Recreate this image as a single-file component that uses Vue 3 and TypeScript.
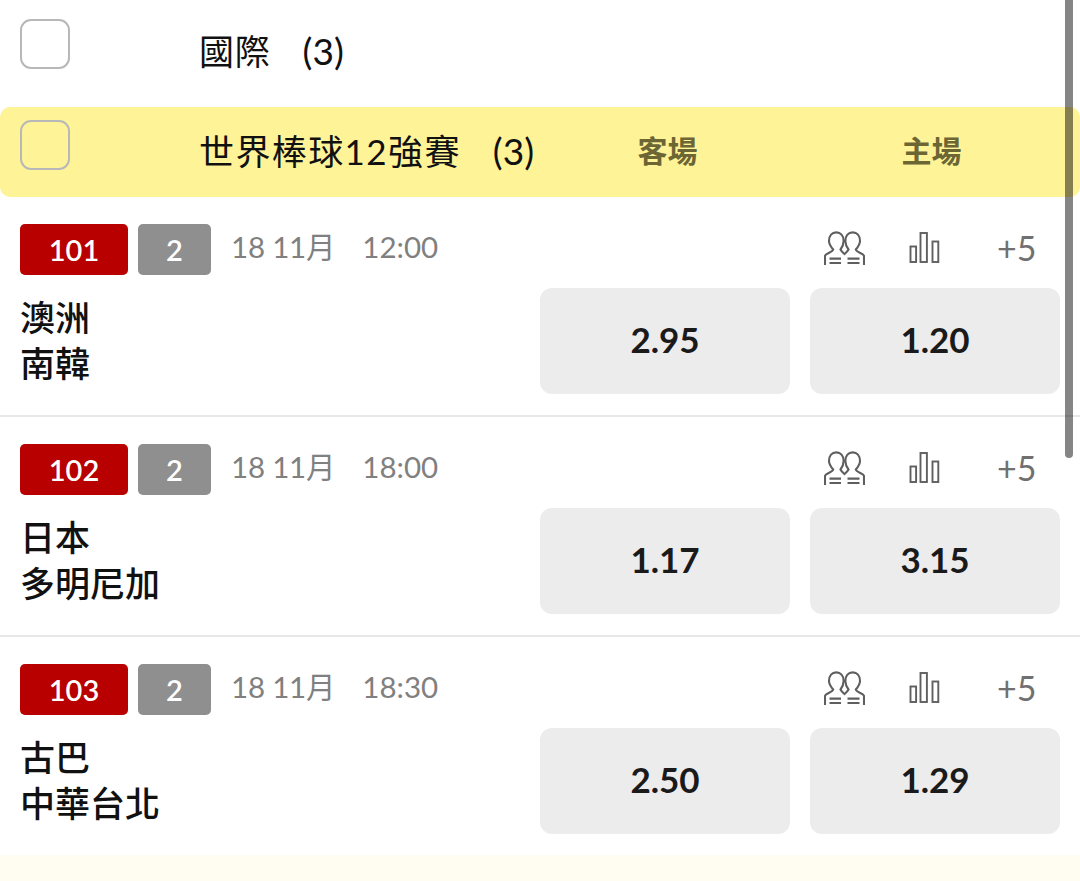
<script setup lang="ts">
interface Match { code: string; time: string; away: string; home: string; oddA: string; oddB: string }
const matches: Match[] = [
  { code: '101', time: '12:00', away: '澳洲', home: '南韓', oddA: '2.95', oddB: '1.20' },
  { code: '102', time: '18:00', away: '日本', home: '多明尼加', oddA: '1.17', oddB: '3.15' },
  { code: '103', time: '18:30', away: '古巴', home: '中華台北', oddA: '2.50', oddB: '1.29' },
]
</script>

<template>
  <div class="page">
    <section class="region">
      <span class="check"></span>
      <span class="title">國際</span>
      <span class="count">(3)</span>
    </section>
    <section class="league">
      <span class="check"></span>
      <span class="title">世界棒球12強賽</span>
      <span class="count">(3)</span>
      <span class="col col-away">客場</span>
      <span class="col col-home">主場</span>
    </section>
    <article v-for="m in matches" :key="m.code" class="match">
      <div class="meta">
        <span class="badge red">{{ m.code }}</span>
        <span class="badge grey">2</span>
        <span class="date">18 11月</span>
        <span class="time">{{ m.time }}</span>
        <span class="tools">
          <svg class="people" width="41" height="35" viewBox="0 0 41 35" fill="none" stroke="#5f5f5f" stroke-width="2.1">
            <path d="M1 34V25C1 22.5 8.5 21.5 9.2 18.5C7 16 5 13 5 10C5 4.5 8 1.4 12.3 1.4S19.6 4.5 19.6 10C19.6 13 18.4 16 16.5 18.5C17.5 20.5 19 21.5 20.5 23C22 21.5 23.5 20.5 24.5 18.5C22.6 16 21.4 13 21.4 10C21.4 4.5 24.4 1.4 28.7 1.4S36 4.5 36 10C36 13 34 16 31.8 18.5C32.5 21.5 40 22.5 40 25V34" />
            <path d="M5.5 27.6H17M5.5 32H17M23.5 27.6H35.5M23.5 32H35.5" stroke-width="2.2" />
          </svg>
          <svg class="bars" width="32" height="32" viewBox="0 0 32 32" fill="none" stroke="#5f5f5f" stroke-width="1.9">
            <rect x="1.5" y="14.5" width="5.6" height="15.5" />
            <rect x="11.5" y="1" width="6.4" height="29" />
            <rect x="23.5" y="9.5" width="5.8" height="20.5" />
          </svg>
          <span class="more">+5</span>
        </span>
      </div>
      <div class="body">
        <div class="teams">
          <div>{{ m.away }}</div>
          <div>{{ m.home }}</div>
        </div>
        <button class="odd">{{ m.oddA }}</button>
        <button class="odd">{{ m.oddB }}</button>
      </div>
    </article>
    <div class="next"></div>
    <div class="scrollbar"></div>
  </div>
</template>

<style>
html, body { margin: 0; background: #fff; overflow: hidden; }
</style>

<style scoped>
.page {
  position: relative;
  width: 1080px;
  height: 881px;
  overflow: hidden;
  display: flex;
  flex-direction: column;
  background: #fff;
  font-family: Lato, "Noto Sans CJK TC", sans-serif;
  color: #111;
}
.region, .league {
  box-sizing: border-box;
  display: flex;
  align-items: center;
  padding-left: 20px;
}
.region { height: 106.5px; padding-bottom: 12px; }
.league {
  height: 90px;
  padding-bottom: 1px;
  background: #fff398;
  border-radius: 10px;
}
.check {
  box-sizing: border-box;
  width: 50px;
  height: 50px;
  border: 2px solid #b8b8b8;
  border-radius: 11px;
  margin-right: 129px;
  margin-top: -13px;
}
.region .check { margin-top: -4px; margin-bottom: 2px; }
.title { font-size: 35px; line-height: 46px; color: #111; letter-spacing: 1.4px; }
.region .title { letter-spacing: 0.8px; }
.region .title, .region .count { margin-top: 8px; }
.count { font-size: 37px; line-height: 46px; margin-left: 32px; color: #111; }
.col {
  position: absolute;
  top: 128.5px;
  font-size: 30px;
  line-height: 42px;
  font-weight: 700;
  color: #6b6634;
}
.col-away { left: 637.5px; }
.col-home { left: 901.5px; }
.match {
  box-sizing: border-box;
  height: 220px;
  padding: 27.5px 20px 0;
  border-bottom: 2px solid #e8e8e8;
}
.match:last-of-type { border-bottom: none; height: 218px; }
.meta {
  display: flex;
  align-items: center;
  height: 50.5px;
}
.badge {
  box-sizing: border-box;
  height: 50.5px;
  border-radius: 5px;
  color: #fff;
  font-size: 29px;
  line-height: 52px;
  text-align: center;
}
.red { width: 108px; background: #b90000; font-weight: 600; }
.grey { width: 73px; margin-left: 10px; background: #8f8f8f; font-weight: 600; }
.date { margin-left: 20px; font-size: 29.5px; color: #808080; margin-top: -8px; letter-spacing: -0.2px; }
.time { margin-left: 27px; font-size: 29.5px; color: #808080; margin-top: -6px; }
.tools {
  margin-left: auto;
  margin-right: 22px;
  display: flex;
  align-items: center;
}
.people { margin-right: 44px; margin-top: -2px; }
.bars { margin-right: 56px; margin-top: -3px; }
.more { font-size: 34px; color: #707070; width: 41px; margin-top: -4px; }
.body {
  display: flex;
  align-items: flex-start;
  margin-top: 13px;
}
.teams {
  width: 520px;
  font-size: 35px;
  line-height: 46px;
  padding-top: 6px;
  font-weight: 500;
  color: #111;
}
.odd {
  width: 250px;
  height: 106.5px;
  border: none;
  padding: 0 0 3px;
  border-radius: 12px;
  background: #ececec;
  font-family: Lato, sans-serif;
  font-size: 35px;
  font-weight: 700;
  color: #1a1a1a;
}
.odd + .odd { margin-left: 20px; }
.next { flex: 1; background: #fffcf2; }
.scrollbar {
  position: absolute;
  top: -10px;
  left: 1065px;
  width: 8px;
  height: 468px;
  border-radius: 4px;
  background: rgba(0, 0, 0, 0.48);
}
</style>
